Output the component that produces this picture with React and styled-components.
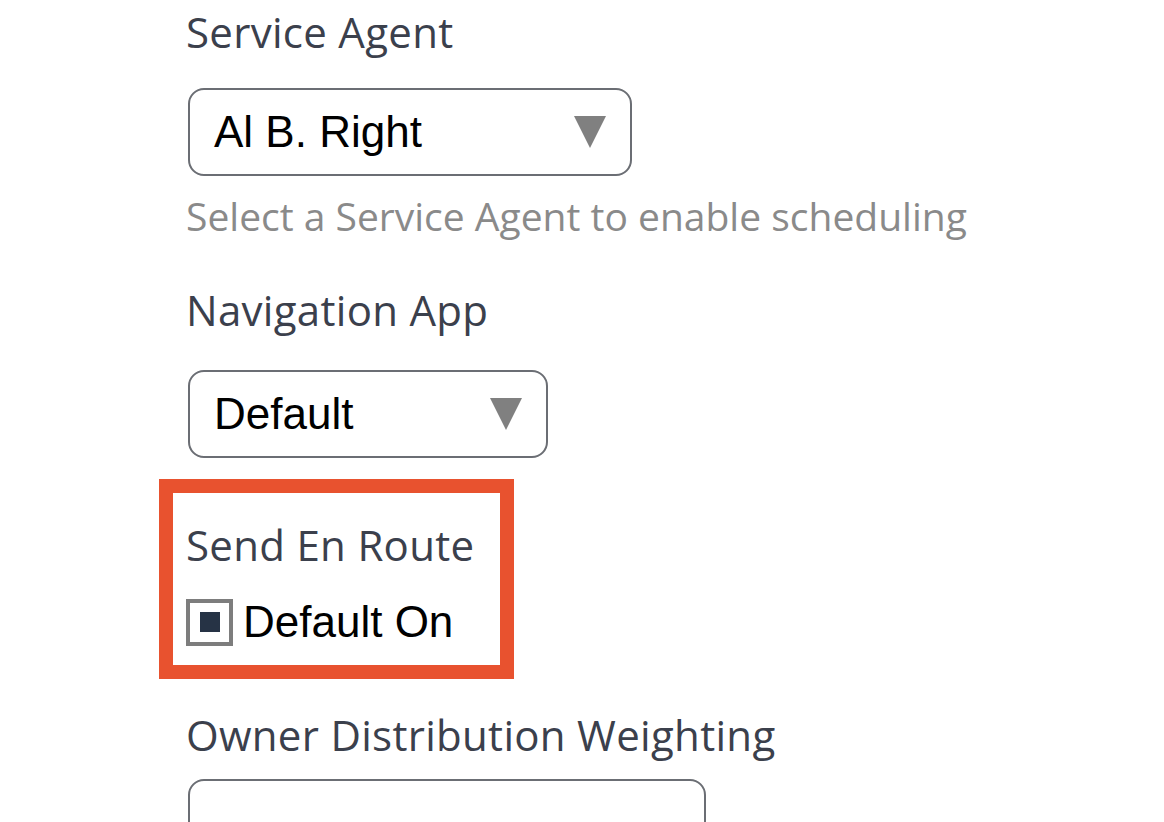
import styled, { createGlobalStyle } from "styled-components";

const GlobalStyle = createGlobalStyle`
	body {
		margin: 0;
		background: #ffffff;
		overflow: hidden;
	}
`;

const Page = styled.div`
	display: flex;
	flex-direction: column;
	align-items: flex-start;
	box-sizing: border-box;
	height: 822px;
	overflow: hidden;
	padding: 6px 0 0 186px;
	font-family: "Open Sans", "Noto Sans", sans-serif;

	& > * {
		flex-shrink: 0;
	}
`;

const Field = styled.div`
	display: flex;
	flex-direction: column;
	align-items: flex-start;
	margin-bottom: ${(p) => p.gap || 0}px;
`;

const Label = styled.div`
	color: #3b404c;
	font-size: 42px;
	letter-spacing: 0.3px;
	line-height: 52px;
	margin-bottom: ${(p) => p.space || 30}px;
`;

const Select = styled.div`
	display: flex;
	align-items: center;
	justify-content: space-between;
	box-sizing: border-box;
	width: ${(p) => p.width}px;
	height: 88px;
	margin-left: 2px;
	padding: 0 24px 0 24px;
	border: 2px solid #6b6e74;
	border-radius: 16px;
	font-family: "Liberation Sans", Arial, sans-serif;
	font-size: 44px;
	color: #000000;
`;

const Arrow = styled.span`
	width: 0;
	height: 0;
	border-left: 16px solid transparent;
	border-right: 16px solid transparent;
	border-top: 32px solid #808080;
`;

const Hint = styled.div`
	color: #8a8a8a;
	font-size: 39px;
	line-height: 48px;
	margin-top: 16px;
`;

const Highlight = styled.div`
	display: flex;
	flex-direction: column;
	align-items: flex-start;
	box-sizing: border-box;
	width: 355px;
	height: 200px;
	margin-left: -27px;
	padding: 26px 0 0 13px;
	border: 14px solid #e8522f;
	margin-bottom: 30px;
`;

const CheckRow = styled.label`
	display: flex;
	align-items: center;
	gap: 10px;
	font-family: "Liberation Sans", Arial, sans-serif;
	font-size: 44px;
	color: #000000;
`;

const Box = styled.span`
	display: flex;
	align-items: center;
	justify-content: center;
	box-sizing: border-box;
	width: 47px;
	height: 47px;
	border: 4px solid #7d7d7d;
	background: #ffffff;
`;

const BoxFill = styled.span`
	width: 20px;
	height: 20px;
	background: #263345;
`;

const Input = styled.div`
	box-sizing: border-box;
	width: 518px;
	height: 88px;
	margin-left: 2px;
	border: 2px solid #6b6e74;
	border-radius: 16px;
`;

export default function App() {
	return (
		<>
			<GlobalStyle />
			<Page>
				<Field gap={44}>
					<Label>Service Agent</Label>
					<Select width={444}>
						Al B. Right
						<Arrow />
					</Select>
					<Hint>Select a Service Agent to enable scheduling</Hint>
				</Field>
				<Field gap={21}>
					<Label space={34}>Navigation App</Label>
					<Select width={360}>
						Default
						<Arrow />
					</Select>
				</Field>
				<Highlight>
					<Label space={26}>Send En Route</Label>
					<CheckRow>
						<Box>
							<BoxFill />
						</Box>
						Default On
					</CheckRow>
				</Highlight>
				<Field>
					<Label space={18}>Owner Distribution Weighting</Label>
					<Input />
				</Field>
			</Page>
		</>
	);
}
